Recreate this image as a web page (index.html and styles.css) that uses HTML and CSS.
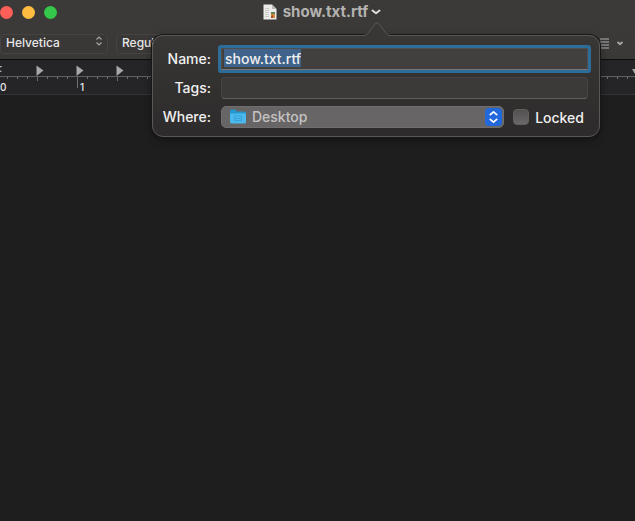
FILE: index.html
```html
<!DOCTYPE html>
<html lang="en">
<head>
<meta charset="utf-8">
<title>show.txt.rtf</title>
<link rel="stylesheet" href="styles.css">
</head>
<body>
<div class="window">
  <header class="chrome">
    <div class="titlebar">
      <div class="lights">
        <button class="light close" aria-label="Close"></button>
        <button class="light minimize" aria-label="Minimize"></button>
        <button class="light zoom" aria-label="Zoom"></button>
      </div>
      <button class="title">
        <svg class="doc-icon" width="14" height="16" viewBox="0 0 14 16" aria-hidden="true">
          <path d="M0.500 0.500H9L13.500 5V15.500H0.500Z" fill="#ebebe9"/>
          <path d="M9 0.500V5H13.500Z" fill="#b9b9b7"/>
          <path d="M2 4.500H6M2 6.500H6M2 8.500H6M2 10.500H6M2 12.500H6" stroke="#c8c8c6"/>
          <path d="M8 8H12V14H8Z" fill="#d98a3c"/>
          <path d="M8 8H12V10H8Z" fill="#5d7e55"/>
          <path d="M8 12L10 11V14H8Z" fill="#a34c2b"/>
        </svg>
        <span>show.txt.rtf</span>
        <svg width="10" height="6" viewBox="0 0 10 6" aria-hidden="true"><path d="M1.500 1.500L5 4.300L8.500 1.500" fill="none" stroke="#dededd" stroke-width="2" stroke-linecap="round" stroke-linejoin="round"/></svg>
      </button>
    </div>
    <div class="toolbar">
      <div class="picker">
        <select aria-label="Font family"><option>Helvetica</option></select>
        <svg class="picker-arrows" width="8" height="10" viewBox="0 0 8 10" aria-hidden="true"><path d="M1.500 3.500L4 1L6.500 3.500M1.500 6.500L4 9L6.500 6.500" fill="none" stroke="#a5a4a3" stroke-width="1.200"/></svg>
      </div>
      <div class="picker">
        <select aria-label="Typeface"><option>Regular</option></select>
        <svg class="picker-arrows" width="8" height="10" viewBox="0 0 8 10" aria-hidden="true"><path d="M1.500 3.500L4 1L6.500 3.500M1.500 6.500L4 9L6.500 6.500" fill="none" stroke="#a5a4a3" stroke-width="1.200"/></svg>
      </div>
      <button class="list-button" aria-label="List style">
        <svg width="26" height="12" viewBox="0 0 26 12" aria-hidden="true">
          <path d="M0 2H9M0 5H9M0 8H9M0 11H9" stroke="#8c8b8a" stroke-width="1.500"/>
          <path d="M17.500 5L20 7.200L22.500 5" fill="none" stroke="#a9a8a7" stroke-width="1.800"/>
        </svg>
      </button>
    </div>
  </header>
  <div class="ruler">
    <svg class="ruler-scale" width="100%" height="34" aria-hidden="true">
      <defs>
        <pattern id="ticks" x="7" y="0" width="10" height="34" patternUnits="userSpaceOnUse"><path d="M0 17H1V19H0Z" fill="#6f6e70"/></pattern>
        <pattern id="halves" x="37" y="0" width="40" height="34" patternUnits="userSpaceOnUse"><path d="M0 17H1V21H0Z" fill="#6f6e70"/></pattern>
        <pattern id="inches" x="77" y="0" width="80" height="34" patternUnits="userSpaceOnUse"><path d="M0 16H1V28H0Z" fill="#6f6e70"/></pattern>
      </defs>
      <rect width="100%" height="34" fill="url(#ticks)"/>
      <rect width="100%" height="34" fill="url(#halves)"/>
      <rect width="100%" height="34" fill="url(#inches)"/>
      <rect y="16" width="100%" height="1" fill="#5f5e60"/>
      <g fill="#a8a7a8">
        <path d="M36.500 5.500L43.500 10.500L36.500 16Z"/>
        <path d="M76.500 5.500L83.500 10.500L76.500 16Z"/>
        <path d="M116.500 5.500L123.500 10.500L116.500 16Z"/>
        <path d="M0 6H2V7H1L0 8ZM0 10L2 12H0Z"/>
      </g>
      <svg x="100%" overflow="visible"><path d="M-3 9H3L0 14Z" fill="#a8a7a8"/></svg>
    </svg>
    <div class="numbers"><span>0</span><span>1</span></div>
  </div>
  <main class="page" aria-label="Document"></main>

  <form class="popover">
    <svg class="pointer" width="32" height="16" viewBox="0 0 32 16" aria-hidden="true">
      <path d="M0 15C5 15 6 14 8 11L14 3Q16 0.500 18 3L24 11C26 14 27 15 32 15V16H0Z" fill="#383735"/>
      <path d="M0 14.500C5 14.500 6 13.500 8 11L14 3Q16 0.500 18 3L24 11C26 13.500 27 14.500 32 14.500" fill="none" stroke="#595856"/>
    </svg>
    <label for="name">Name:</label>
    <input class="field focused" id="name" type="text" value="show.txt.rtf" size="1">
    <label for="tags">Tags:</label>
    <input class="field" id="tags" type="text" size="1">
    <label for="where">Where:</label>
    <div class="where-row">
      <div class="where">
        <select id="where"><option>Desktop</option></select>
        <svg class="folder" width="16" height="15" viewBox="0 0 16 15" aria-hidden="true">
          <path d="M0 2Q0 0.500 1.500 0.500H5L7 2.500H14.500Q16 2.500 16 4V8H0Z" fill="#2499cf"/>
          <path d="M0 4.500H16V13Q16 14.500 14.500 14.500H1.500Q0 14.500 0 13Z" fill="#4bb9ed"/>
          <path d="M4.500 7H11.500V11.500H4.500ZM5 9.500H11" fill="none" stroke="#36a4d8"/>
        </svg>
        <svg class="stepper" width="17" height="18" viewBox="0 0 17 18" aria-hidden="true">
          <rect width="17" height="18" rx="4" fill="#2168dc"/>
          <path d="M5.300 6.700L8.500 3.800L11.700 6.700M5.300 11.300L8.500 14.200L11.700 11.300" fill="none" stroke="#fff" stroke-width="1.700" stroke-linecap="round" stroke-linejoin="round"/>
        </svg>
      </div>
      <label class="locked"><input type="checkbox">Locked</label>
    </div>
  </form>
</div>
</body>
</html>
```
FILE: styles.css
```css
* { box-sizing: border-box; }

body {
  margin: 0;
  background: #1e1e1e;
  color: #e8e7e6;
  font-family: Inter, "Liberation Sans", sans-serif;
}

button, input, select { font: inherit; color: inherit; }

button {
  padding: 0;
  border: 0;
  background: none;
}

.window {
  position: relative;
  display: flex;
  flex-direction: column;
  min-height: 100vh;
  overflow: hidden;
}

.chrome {
  background: linear-gradient(#3c3a38, #3a3938);
  border-bottom: 1px solid #0c0c0c;
}

.titlebar {
  display: grid;
  grid-template-columns: 1fr auto 1fr;
  align-items: center;
  height: 24px;
  padding-left: 9px;
}

.lights {
  display: flex;
  gap: 9px;
  margin-left: -9px;
}

.light {
  width: 13px;
  height: 13px;
  border-radius: 50%;
}

.close { background: #fe5f58; }
.minimize { background: #febc40; }
.zoom { background: #34c749; }

.title {
  display: flex;
  align-items: center;
  gap: 6px;
  color: #b4b3b1;
  font-size: 15px;
  font-weight: 700;
  line-height: 24px;
}

.title span { margin-right: -3px; }

.toolbar {
  display: flex;
  align-items: center;
  gap: 8px;
  height: 35px;
  padding: 2px 9px 0 0;
}

.picker {
  position: relative;
  width: 108px;
}

.picker select {
  appearance: none;
  width: 100%;
  height: 20px;
  padding: 0 5px 2px;
  border: 1px solid #454442;
  border-radius: 4px;
  background: #393836;
  font-size: 12px;
  font-weight: 500;
  line-height: 16px;
}

.picker-arrows {
  position: absolute;
  right: 5px;
  top: 5px;
  pointer-events: none;
}

.list-button {
  display: flex;
  margin-left: auto;
}

.ruler {
  position: relative;
  height: 35px;
  background: #252426;
  border-bottom: 1px solid #343335;
}

.ruler-scale { display: block; }

.numbers {
  position: absolute;
  top: 21px;
  left: 0;
  display: grid;
  grid-template-columns: 80px 80px;
  font-size: 10px;
  font-weight: 500;
  line-height: 12px;
}

.page { flex: 1; background: #1e1e1e; }

.popover {
  position: absolute;
  top: 35px;
  left: 152px;
  right: 35px;
  display: grid;
  grid-template-columns: 58px 1fr;
  gap: 7px 10px;
  align-items: center;
  padding: 12px 11px 8px 0;
  border: 1px solid #595856;
  border-radius: 11px;
  background: linear-gradient(#383735, #2d2b2b);
  box-shadow: 0 0 0 1px #171717, 0 3px 8px #0006;
  color: #f1f0f0;
  font-size: 14px;
  font-weight: 500;
}

.pointer {
  position: absolute;
  top: -15px;
  left: 50%;
  margin-left: -15px;
}

.popover > label {
  padding-bottom: 2px;
  text-align: right;
}

.field {
  width: 100%;
  height: 22px;
  padding: 0 3px 2px;
  border: 1px solid #454443;
  border-bottom-color: #626160;
  border-radius: 4px;
  outline: 0;
  background: #3c3a39;
}

.focused {
  border: 1px solid #514f4e;
  border-bottom-color: #777675;
  border-radius: 1px;
  background: linear-gradient(90deg, #3f638b, #3f638b) 2px 0 / 77px 18px no-repeat #42403e;
  box-shadow: 0 0 0 3px #2c6d99;
}

.where-row {
  display: flex;
  align-items: center;
  gap: 9px;
}

.where {
  position: relative;
  flex: 1;
}

.where select {
  appearance: none;
  display: block;
  width: 100%;
  height: 22px;
  padding: 0 30px;
  border: 1px solid #6f6d6d;
  border-radius: 5px;
  background: #676565;
  color: #c4c3c3;
  line-height: 20px;
}

.folder, .stepper {
  position: absolute;
  pointer-events: none;
}

.folder { left: 9px; top: 3px; }
.stepper { right: 2px; top: 2px; }

.locked {
  display: flex;
  align-items: center;
  gap: 6px;
  margin-right: 4px;
}

.locked input {
  appearance: none;
  width: 16px;
  height: 16px;
  margin: 0;
  border: 1px solid #636160;
  border-radius: 4px;
  background: linear-gradient(#525050, #6b6968);
}
```
